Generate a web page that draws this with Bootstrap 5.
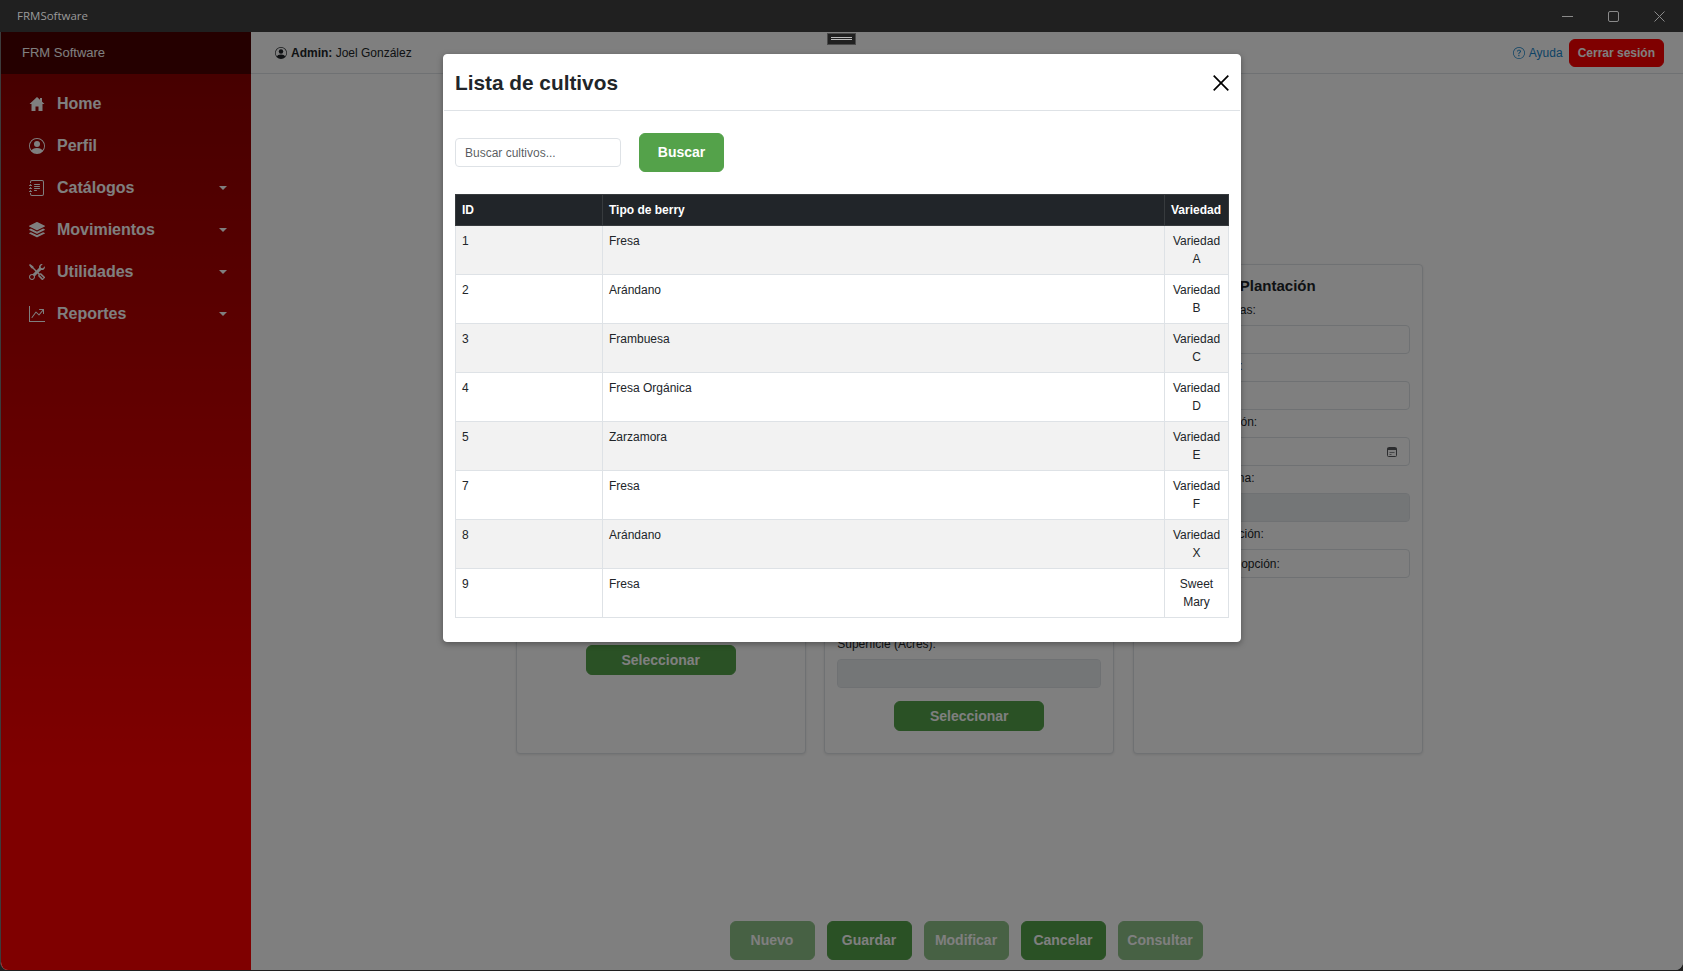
<!DOCTYPE html>
<html lang="es">
<head>
    <meta charset="UTF-8">
    <meta name="viewport" content="width=device-width, initial-scale=1.0">
    <title>FRMSoftware</title>
    <link href="https://cdn.jsdelivr.net/npm/bootstrap@5.3.0/dist/css/bootstrap.min.css" rel="stylesheet">
    <style>
        html, body { height: 100%; }
        body { background: #202020; font-family: "Liberation Sans", Arial, sans-serif; font-size: 12px; overflow: hidden; }

        .title-bar { height: 32px; background: #202020; color: #9a9a9a; font-family: "Open Sans", "Noto Sans", sans-serif; font-size: 11.5px; padding: 0 17px; }
        .win-controls { gap: 35px; margin-right: 1px; color: #8a8a8a; }
        .app-win { height: 938px; background: #fff; border-left: 1px solid #3c3c3c; border-radius: 0 0 8px 8px; overflow: hidden; }

        .side-menu { width: 250px; flex: none; }
        .side-brand { height: 42px; background: #4a0000; color: #fff; font-size: 13px; padding-left: 21px; }
        .side-nav { flex: 1; background: linear-gradient(#8e0000, #ff0000 78%); padding: 9px 24px 0 28px; }
        .side-nav .nav-link { height: 42px; padding: 0; gap: 12px; color: #fff; font-size: 16px; font-weight: 700; }
        .side-nav svg { width: 16px; height: 16px; flex: none; }
        .side-nav .dropdown-toggle::after { margin-left: auto; border-top-width: 4px; border-left-width: 4px; border-right-width: 4px; }

        .top-bar { height: 42px; border-bottom: 1px solid #dee2e6; padding: 0 19px 0 24px; font-size: 12px; color: #212529; }
        .help-link { color: #1a86cc; text-decoration: none; }
        .logout-btn { --bs-btn-bg: #ff0000; --bs-btn-border-color: #ff0000; --bs-btn-color: #fff; --bs-btn-font-size: 12px; --bs-btn-font-weight: 700; --bs-btn-padding-x: 8px; --bs-btn-padding-y: 0; --bs-btn-border-radius: 6px; height: 28px; margin-left: 6px; }

        .work-area { padding-top: 190px; }
        .form-cards { gap: 18.5px; padding-left: 4.5px; }
        .form-box { width: 290px; height: 490px; --bs-card-border-radius: 4px; --bs-card-border-color: #dee2e6; box-shadow: 0 1px 3px rgba(0, 0, 0, .1); padding: 7px 12px 0; }
        .form-box.box-main { padding-top: 9px; }
        .form-box h2 { font-size: 15px; font-weight: 700; line-height: 24px; min-height: 24px; margin: 0 0 3px; text-align: center; color: #212529; }
        .field-group { margin-bottom: 3px; }
        .field-group label { display: block; line-height: 18px; min-height: 18px; margin-bottom: 6px; color: #212529; }
        .field-group .form-control { height: 29px; min-height: 29px; padding: 0 9px; font-size: 12px; border-radius: 4px; }
        .field-group input[type="date"]::-webkit-calendar-picker-indicator { width: 12px; height: 12px; margin: 0 2px 0 0; padding: 0; opacity: .75; background: url("data:image/svg+xml,%3Csvg xmlns='http://www.w3.org/2000/svg' viewBox='0 0 12 12'%3E%3Crect x='1.5' y='1.5' width='9' height='9' rx='1' fill='none' stroke='%23212529'/%3E%3Cpath d='M1.5 2h9v2h-9z' fill='%23212529'/%3E%3Cpath d='M3.5 6h5v1h-5zM3.5 8h2v1h-2z' fill='%23212529' fill-opacity='.7'/%3E%3C/svg%3E") center / 12px no-repeat; }
        .green-btn { --bs-btn-bg: #54a24a; --bs-btn-border-color: #54a24a; --bs-btn-color: #fff; --bs-btn-disabled-bg: #54a24a; --bs-btn-disabled-border-color: #54a24a; --bs-btn-disabled-color: #fff; --bs-btn-font-size: 14px; --bs-btn-font-weight: 700; --bs-btn-border-radius: 6px; --bs-btn-padding-x: 0; --bs-btn-padding-y: 0; }
        .pick-btn { width: 150px; height: 30px; margin-top: 10px; }
        .action-bar { gap: 12px; margin-top: 167px; margin-left: -2px; }
        .action-bar .btn { width: 85px; height: 39px; }

        .app-win .modal-backdrop { position: absolute; width: 100%; height: 100%; }
        .app-modal { position: absolute; overflow: hidden; --bs-modal-border-radius: 4px; --bs-modal-inner-border-radius: 3px; }
        .app-modal .modal-dialog { max-width: 798px; margin: 22px auto 0; }
        .app-modal .modal-content { box-shadow: 0 2px 6px rgba(0, 0, 0, .35); border-color: #fff; background-clip: border-box; }
        .app-modal .modal-header { height: 56px; padding: 0 11px; }
        .app-modal .modal-title { font-size: 20.8px; font-weight: 700; color: #212529; }
        .close-x { background: none; border: 0; padding: 0; width: 16px; height: 16px; line-height: 0; }
        .app-modal .modal-body { padding: 22px 11px 23px; }
        .search-row { gap: 18px; margin-bottom: 22px; }
        .search-input { width: 166px; height: 29px; min-height: 29px; padding: 0 9px; font-size: 12px; border-radius: 4px; }
        .search-btn { width: 85px; height: 39px; }
        .crop-table { table-layout: fixed; width: 773px; margin: 0; font-size: 12px; line-height: 18px; }
        .crop-table th, .crop-table td { padding: 6px; }
        .crop-table td:last-child { text-align: center; }
        .col-id { width: 147px; }
        .col-type { width: 562px; }
        .col-variety { width: 64px; }

        .grip { position: absolute; left: 826px; top: 1px; width: 29px; height: 12px; background: #202020; border: 1px solid #4a4a4a; z-index: 1060; }
        .grip::before { content: ""; display: block; margin: 3px 3px 0; height: 3px; border-top: 1px solid #bbb; border-bottom: 1px solid #bbb; }
    </style>
</head>
<body>
    <div class="title-bar d-flex align-items-center justify-content-between">
        <span>FRMSoftware</span>
        <div class="win-controls d-flex align-items-center">
            <svg width="11" height="11" viewBox="0 0 11 11"><path d="M0 5.5h11" stroke="currentColor" fill="none"/></svg>
            <svg width="11" height="11" viewBox="0 0 11 11"><rect x=".5" y=".5" width="10" height="10" rx="1.5" stroke="currentColor" fill="none"/></svg>
            <svg width="11" height="11" viewBox="0 0 11 11"><path d="M.5.5l10 10M10.5.5l-10 10" stroke="currentColor" fill="none"/></svg>
        </div>
    </div>

    <div class="app-win position-relative d-flex">
        <aside class="side-menu d-flex flex-column">
            <div class="side-brand d-flex align-items-center">FRM Software</div>
            <nav class="side-nav nav flex-column flex-nowrap">
                <a class="nav-link d-flex align-items-center" href="#">
                    <svg viewBox="0 0 16 16" fill="currentColor"><path d="M8 1l7.5 7h-2V15h-4V10.5h-3V15h-4V8h-2zM11 2h2v4l-2-2z"/></svg>
                    <span>Home</span>
                </a>
                <a class="nav-link d-flex align-items-center" href="#">
                    <svg viewBox="0 0 16 16" fill="currentColor"><path d="M11 6a3 3 0 1 1-6 0 3 3 0 0 1 6 0z"/><path fill-rule="evenodd" d="M0 8a8 8 0 1 1 16 0A8 8 0 0 1 0 8zm8-7a7 7 0 0 0-5.468 11.37C3.242 11.226 4.805 10 8 10s4.757 1.225 5.468 2.37A7 7 0 0 0 8 1z"/></svg>
                    <span>Perfil</span>
                </a>
                <a class="nav-link dropdown-toggle d-flex align-items-center" href="#">
                    <svg viewBox="0 0 16 16" fill="currentColor"><path d="M5 10.5a.5.5 0 0 1 .5-.5h2a.5.5 0 0 1 0 1h-2a.5.5 0 0 1-.5-.5zm0-2a.5.5 0 0 1 .5-.5h5a.5.5 0 0 1 0 1h-5a.5.5 0 0 1-.5-.5zm0-2a.5.5 0 0 1 .5-.5h5a.5.5 0 0 1 0 1h-5a.5.5 0 0 1-.5-.5zm0-2a.5.5 0 0 1 .5-.5h5a.5.5 0 0 1 0 1h-5a.5.5 0 0 1-.5-.5z"/><path d="M3 0h10a2 2 0 0 1 2 2v12a2 2 0 0 1-2 2H3a2 2 0 0 1-2-2v-1h1v1a1 1 0 0 0 1 1h10a1 1 0 0 0 1-1V2a1 1 0 0 0-1-1H3a1 1 0 0 0-1 1v1H1V2a2 2 0 0 1 2-2z"/><path d="M1 5v-.5a.5.5 0 0 1 1 0V5h.5a.5.5 0 0 1 0 1h-2a.5.5 0 0 1 0-1H1zm0 3v-.5a.5.5 0 0 1 1 0V8h.5a.5.5 0 0 1 0 1h-2a.5.5 0 0 1 0-1H1zm0 3v-.5a.5.5 0 0 1 1 0v.5h.5a.5.5 0 0 1 0 1h-2a.5.5 0 0 1 0-1H1z"/></svg>
                    <span>Catálogos</span>
                </a>
                <a class="nav-link dropdown-toggle d-flex align-items-center" href="#">
                    <svg viewBox="0 0 16 16" fill="currentColor"><path d="m14.12 10.163 1.715.858c.22.11.22.424 0 .534L8.267 15.34a.598.598 0 0 1-.534 0L.165 11.555a.299.299 0 0 1 0-.534l1.716-.858 5.317 2.659c.505.252 1.1.252 1.604 0l5.317-2.66zM7.733.063a.598.598 0 0 1 .534 0l7.568 3.784a.3.3 0 0 1 0 .535L8.267 8.165a.598.598 0 0 1-.534 0L.165 4.382a.299.299 0 0 1 0-.535L7.733.063z"/><path d="m14.12 6.576 1.715.858c.22.11.22.424 0 .534l-7.568 3.784a.598.598 0 0 1-.534 0L.165 7.968a.299.299 0 0 1 0-.534l1.716-.858 5.317 2.659c.505.252 1.1.252 1.604 0l5.317-2.659z"/></svg>
                    <span>Movimientos</span>
                </a>
                <a class="nav-link dropdown-toggle d-flex align-items-center" href="#">
                    <svg viewBox="0 0 16 16" fill="currentColor"><path d="M1 0 0 1l2.2 3.081a1 1 0 0 0 .815.419h.07a1 1 0 0 1 .708.293l2.675 2.675-2.617 2.654A3.003 3.003 0 0 0 0 13a3 3 0 1 0 5.878-.851l2.654-2.617.968.968-.305.914a1 1 0 0 0 .242 1.023l3.27 3.27a.997.997 0 0 0 1.414 0l1.586-1.586a.997.997 0 0 0 0-1.414l-3.27-3.27a1 1 0 0 0-1.023-.242L10.5 9.5l-.96-.96 2.68-2.643A3.005 3.005 0 0 0 16 3c0-.269-.035-.53-.102-.777l-2.14 2.141L12 4l-.364-1.757L13.777.102a3 3 0 0 0-3.675 3.68L7.462 6.46 4.793 3.793a1 1 0 0 1-.293-.707v-.071a1 1 0 0 0-.419-.814L1 0Zm9.646 10.646a.5.5 0 0 1 .708 0l2.914 2.915a.5.5 0 0 1-.707.707l-2.915-2.914a.5.5 0 0 1 0-.708ZM3 11l.471.242.529.026.287.445.445.287.026.529L5 13l-.242.471-.026.529-.445.287-.287.445-.529.026L3 15l-.471-.242L2 14.732l-.287-.445L1.268 14l-.026-.529L1 13l.242-.471.026-.529.445-.287.287-.445.529-.026L3 11Z"/></svg>
                    <span>Utilidades</span>
                </a>
                <a class="nav-link dropdown-toggle d-flex align-items-center" href="#">
                    <svg viewBox="0 0 16 16" fill="currentColor"><path fill-rule="evenodd" d="M0 0h1v15h15v1H0V0Zm10 3.5a.5.5 0 0 1 .5-.5h4a.5.5 0 0 1 .5.5v4a.5.5 0 0 1-1 0V4.9l-3.613 4.417a.5.5 0 0 1-.74.037L7.06 6.767l-3.656 5.027a.5.5 0 0 1-.808-.588l4-5.5a.5.5 0 0 1 .758-.06l2.609 2.61L13.445 4H10.5a.5.5 0 0 1-.5-.5Z"/></svg>
                    <span>Reportes</span>
                </a>
            </nav>
        </aside>

        <div class="flex-grow-1 d-flex flex-column">
            <header class="top-bar d-flex align-items-center">
                <svg class="me-1" width="12" height="12" viewBox="0 0 16 16" fill="currentColor"><path d="M11 6a3 3 0 1 1-6 0 3 3 0 0 1 6 0z"/><path fill-rule="evenodd" d="M0 8a8 8 0 1 1 16 0A8 8 0 0 1 0 8zm8-7a7 7 0 0 0-5.468 11.37C3.242 11.226 4.805 10 8 10s4.757 1.225 5.468 2.37A7 7 0 0 0 8 1z"/></svg>
                <span><b>Admin:</b> Joel González</span>
                <a class="help-link ms-auto d-flex align-items-center gap-1" href="#">
                    <svg width="12" height="12" viewBox="0 0 16 16" fill="currentColor"><path d="M8 15A7 7 0 1 1 8 1a7 7 0 0 1 0 14zm0 1A8 8 0 1 0 8 0a8 8 0 0 0 0 16z"/><path d="M5.255 5.786a.237.237 0 0 0 .241.247h.825c.138 0 .248-.113.266-.25.09-.656.54-1.134 1.342-1.134.686 0 1.314.343 1.314 1.168 0 .635-.374.927-.965 1.371-.673.489-1.206 1.06-1.168 1.987l.003.217a.25.25 0 0 0 .25.246h.811a.25.25 0 0 0 .25-.25v-.105c0-.718.273-.927 1.01-1.486.609-.463 1.244-.977 1.244-2.056 0-1.511-1.276-2.241-2.673-2.241-1.267 0-2.655.59-2.75 2.286zm1.557 5.763c0 .533.425.927 1.01.927.609 0 1.028-.394 1.028-.927 0-.552-.42-.94-1.029-.94-.584 0-1.009.388-1.009.94z"/></svg>
                    Ayuda
                </a>
                <button class="btn logout-btn" type="button">Cerrar sesión</button>
            </header>

            <main class="work-area flex-grow-1 d-flex flex-column align-items-center">
                <div class="form-cards d-flex">
                    <div class="card form-box">
                        <h2></h2>
                        <div class="field-group"><label></label><input class="form-control" disabled></div>
                        <div class="field-group"><label></label><input class="form-control" disabled></div>
                        <div class="field-group"><label></label><input class="form-control" disabled></div>
                        <div class="field-group"><label></label><input class="form-control" disabled></div>
                        <div class="field-group"><label></label><input class="form-control" disabled></div>
                        <div class="field-group"><label></label><input class="form-control" disabled></div>
                        <button class="btn green-btn pick-btn align-self-center" type="button">Seleccionar</button>
                    </div>
                    <div class="card form-box">
                        <h2></h2>
                        <div class="field-group"><label></label><input class="form-control" disabled></div>
                        <div class="field-group"><label></label><input class="form-control" disabled></div>
                        <div class="field-group"><label></label><input class="form-control" disabled></div>
                        <div class="field-group"><label></label><input class="form-control" disabled></div>
                        <div class="field-group"><label></label><input class="form-control" disabled></div>
                        <div class="field-group"><label></label><input class="form-control" disabled></div>
                        <div class="field-group"><label>Superficie (Acres):</label><input class="form-control" disabled></div>
                        <button class="btn green-btn pick-btn align-self-center" type="button">Seleccionar</button>
                    </div>
                    <div class="card form-box box-main">
                        <h2>Plantación</h2>
                        <div class="field-group"><label>Cantidad de plantas:</label><input class="form-control"></div>
                        <div class="field-group"><label>Cantidad de lotes:</label><input class="form-control"></div>
                        <div class="field-group"><label>Fecha de plantación:</label><input class="form-control" type="date"></div>
                        <div class="field-group"><label>Número de semana:</label><input class="form-control" disabled></div>
                        <div class="field-group"><label>Método de plantación:</label><input class="form-control" value="Selecciona una opción:"></div>
                    </div>
                </div>
                <div class="action-bar d-flex">
                    <button class="btn green-btn" type="button" disabled>Nuevo</button>
                    <button class="btn green-btn" type="button">Guardar</button>
                    <button class="btn green-btn" type="button" disabled>Modificar</button>
                    <button class="btn green-btn" type="button">Cancelar</button>
                    <button class="btn green-btn" type="button" disabled>Consultar</button>
                </div>
            </main>
        </div>

        <div class="modal-backdrop show"></div>
        <div class="grip"></div>

        <div class="modal d-block app-modal">
            <div class="modal-dialog">
                <div class="modal-content">
                    <div class="modal-header justify-content-between">
                        <h5 class="modal-title">Lista de cultivos</h5>
                        <button class="close-x" type="button" aria-label="Cerrar">
                            <svg width="16" height="16" viewBox="0 0 16 16"><path d="M.7.7l14.6 14.6M15.3.7L.7 15.3" stroke="#000" stroke-width="1.7" fill="none"/></svg>
                        </button>
                    </div>
                    <div class="modal-body">
                        <div class="search-row d-flex align-items-center">
                            <input class="form-control search-input" type="text" placeholder="Buscar cultivos...">
                            <button class="btn green-btn search-btn" type="button">Buscar</button>
                        </div>
                        <table class="table table-striped table-bordered crop-table">
                            <colgroup><col class="col-id"><col class="col-type"><col class="col-variety"></colgroup>
                            <thead class="table-dark">
                                <tr><th>ID</th><th>Tipo de berry</th><th>Variedad</th></tr>
                            </thead>
                            <tbody>
                                <tr><td>1</td><td>Fresa</td><td>Variedad A</td></tr>
                                <tr><td>2</td><td>Arándano</td><td>Variedad B</td></tr>
                                <tr><td>3</td><td>Frambuesa</td><td>Variedad C</td></tr>
                                <tr><td>4</td><td>Fresa Orgánica</td><td>Variedad D</td></tr>
                                <tr><td>5</td><td>Zarzamora</td><td>Variedad E</td></tr>
                                <tr><td>7</td><td>Fresa</td><td>Variedad F</td></tr>
                                <tr><td>8</td><td>Arándano</td><td>Variedad X</td></tr>
                                <tr><td>9</td><td>Fresa</td><td>Sweet Mary</td></tr>
                            </tbody>
                        </table>
                    </div>
                </div>
            </div>
        </div>
    </div>

    <script src="https://cdn.jsdelivr.net/npm/bootstrap@5.3.0/dist/js/bootstrap.bundle.min.js"></script>
</body>
</html>
